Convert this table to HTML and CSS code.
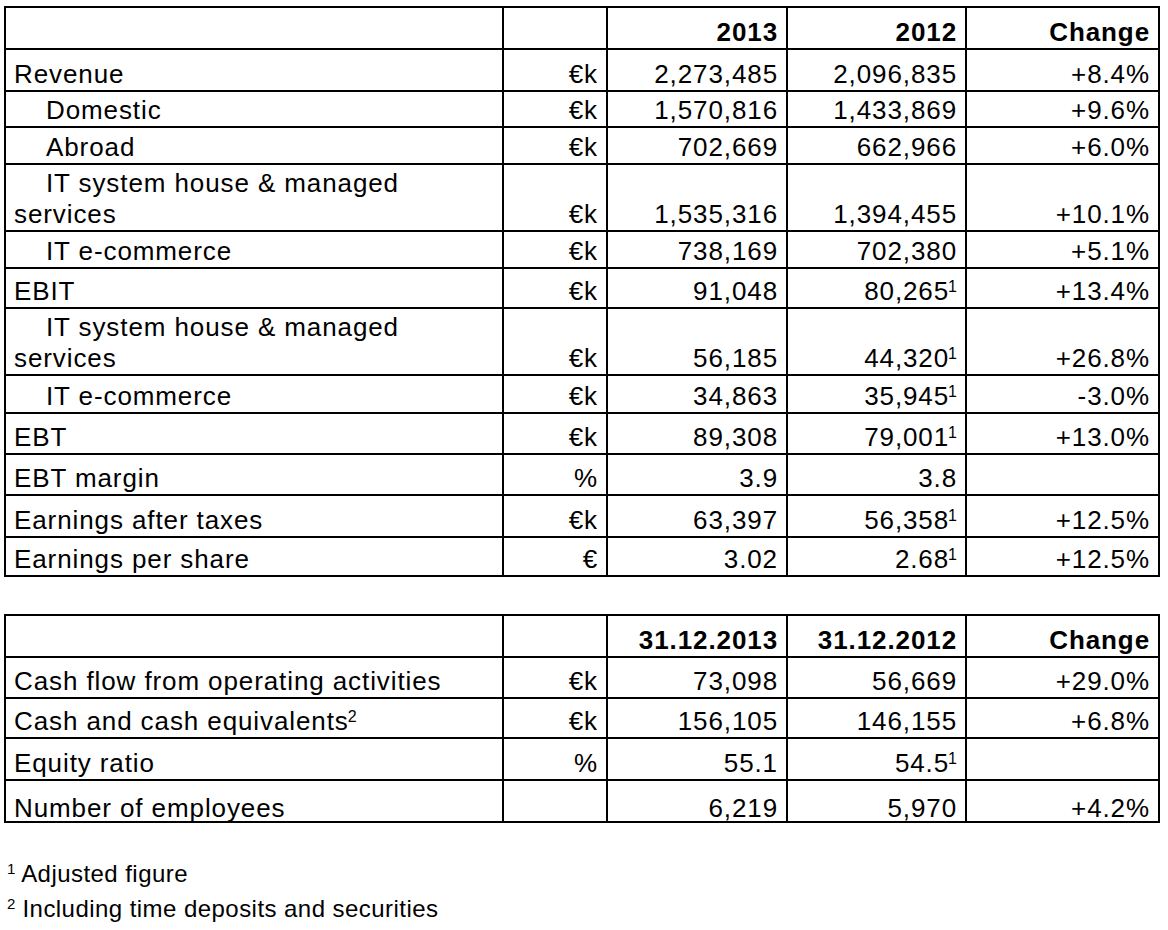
FILE: index.html
```html
<!DOCTYPE html>
<html lang="en">
<head>
<meta charset="utf-8">
<title>Key figures</title>
<link rel="stylesheet" href="styles.css">
</head>
<body>
<div class="page">
  <table class="fig">
    <colgroup>
      <col class="c-label"><col class="c-unit"><col class="c-num"><col class="c-num2"><col class="c-chg">
    </colgroup>
    <tr class="h42"><td></td><td></td><th>2013</th><th>2012</th><th>Change</th></tr>
    <tr class="h42"><td class="label">Revenue</td><td>€k</td><td>2,273,485</td><td>2,096,835</td><td>+8.4%</td></tr>
    <tr class="h36"><td class="label indent">Domestic</td><td>€k</td><td>1,570,816</td><td>1,433,869</td><td>+9.6%</td></tr>
    <tr class="h37"><td class="label indent">Abroad</td><td>€k</td><td>702,669</td><td>662,966</td><td>+6.0%</td></tr>
    <tr class="h67"><td class="label indent">IT system house &amp; managed services</td><td>€k</td><td>1,535,316</td><td>1,394,455</td><td>+10.1%</td></tr>
    <tr class="h37"><td class="label indent">IT e-commerce</td><td>€k</td><td>738,169</td><td>702,380</td><td>+5.1%</td></tr>
    <tr class="h40"><td class="label">EBIT</td><td>€k</td><td>91,048</td><td>80,265<sup class="fn">1</sup></td><td>+13.4%</td></tr>
    <tr class="h67"><td class="label indent">IT system house &amp; managed services</td><td>€k</td><td>56,185</td><td>44,320<sup class="fn">1</sup></td><td>+26.8%</td></tr>
    <tr class="h38"><td class="label indent">IT e-commerce</td><td>€k</td><td>34,863</td><td>35,945<sup class="fn">1</sup></td><td>-3.0%</td></tr>
    <tr class="h41"><td class="label">EBT</td><td>€k</td><td>89,308</td><td>79,001<sup class="fn">1</sup></td><td>+13.0%</td></tr>
    <tr class="h41"><td class="label">EBT margin</td><td>%</td><td>3.9</td><td>3.8</td><td></td></tr>
    <tr class="h42"><td class="label">Earnings after taxes</td><td>€k</td><td>63,397</td><td>56,358<sup class="fn">1</sup></td><td>+12.5%</td></tr>
    <tr class="h39"><td class="label">Earnings per share</td><td>€</td><td>3.02</td><td>2.68<sup class="fn">1</sup></td><td>+12.5%</td></tr>
  </table>

  <table class="fig second">
    <colgroup>
      <col class="c-label"><col class="c-unit"><col class="c-num"><col class="c-num2"><col class="c-chg">
    </colgroup>
    <tr class="h42"><td></td><td></td><th>31.12.2013</th><th>31.12.2012</th><th>Change</th></tr>
    <tr class="h41"><td class="label">Cash flow from operating activities</td><td>€k</td><td>73,098</td><td>56,669</td><td>+29.0%</td></tr>
    <tr class="h40"><td class="label">Cash and cash equivalents<sup class="fn">2</sup></td><td>€k</td><td>156,105</td><td>146,155</td><td>+6.8%</td></tr>
    <tr class="h42"><td class="label">Equity ratio</td><td>%</td><td>55.1</td><td>54.5<sup class="fn">1</sup></td><td></td></tr>
    <tr class="h42 low"><td class="label">Number of employees</td><td></td><td>6,219</td><td>5,970</td><td>+4.2%</td></tr>
  </table>

  <div class="notes">
    <p><sup class="nref">1</sup> Adjusted figure</p>
    <p><sup class="nref">2</sup> Including time deposits and securities</p>
  </div>
</div>
</body>
</html>
```

FILE: styles.css
```css
html, body {
  margin: 0;
  padding: 0;
  background: #fff;
}

body {
  font-family: "Liberation Sans", Arial, sans-serif;
  color: #000;
}

.page {
  padding: 6px 0 0 4px;
}

.fig {
  border-collapse: collapse;
  table-layout: fixed;
  width: 1156px;
  font-size: 26px;
  letter-spacing: 0.9px;
  line-height: 31px;
}

.fig.second {
  margin-top: 37px;
}

.c-label { width: 498px; }
.c-unit { width: 104px; }
.c-num { width: 180px; }
.c-num2 { width: 179px; }
.c-chg { width: 193px; }

.fig td,
.fig th {
  box-sizing: border-box;
  border: 2px solid #000;
  padding: 0 8px;
  vertical-align: bottom;
  text-align: right;
  font-weight: normal;
}

.fig th {
  font-weight: bold;
}

.fig td.label {
  text-align: left;
}

.fig td.indent {
  text-indent: 32px;
}

.low td {
  line-height: 26px;
}

.h36 td, .h36 th { height: 36px; }
.h37 td, .h37 th { height: 37px; }
.h38 td, .h38 th { height: 38px; }
.h39 td, .h39 th { height: 39px; }
.h40 td, .h40 th { height: 40px; }
.h41 td, .h41 th { height: 41px; }
.h42 td, .h42 th { height: 42px; }
.h67 td, .h67 th { height: 67px; }

.fn {
  font-size: 16px;
  line-height: 0;
  vertical-align: 8px;
  letter-spacing: 0;
  margin-left: -1px;
}

.notes {
  margin-top: 33px;
  padding-left: 3px;
  font-size: 24px;
  letter-spacing: 0.45px;
  line-height: 35px;
}

.notes p {
  margin: 0;
}

.nref {
  font-size: 15px;
  line-height: 0;
  vertical-align: 8px;
  letter-spacing: 0;
}
```
